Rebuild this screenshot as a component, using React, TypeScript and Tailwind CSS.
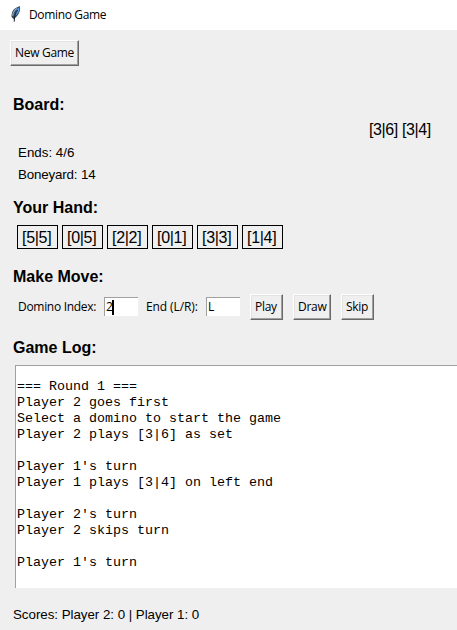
import type { ReactNode } from "react";

const ui = "font-['Open_Sans','Noto_Sans',sans-serif] text-[12px]";

const hand = ["[5|5]", "[0|5]", "[2|2]", "[0|1]", "[3|3]", "[1|4]"];

const log = `
=== Round 1 ===
Player 2 goes first
Select a domino to start the game
Player 2 plays [3|6] as set

Player 1's turn
Player 1 plays [3|4] on left end

Player 2's turn
Player 2 skips turn

Player 1's turn
`;

function Feather() {
  return (
    <svg className="ml-2 h-4 w-4 shrink-0" viewBox="0 0 16 16">
      <path d="M12 .2 C8.2 .8 4.2 4 3.8 7.5 L3.4 10.5 L5.2 13 C9 11.5 13 6 12 .2Z" fill="#34495e" />
      <path d="M11.2 1 C8.8 3 7.4 6 6.6 10.6 C10 8 12 4.5 11.2 1Z" fill="#5b9fe6" />
      <path d="M8.8 2.4 C6.2 4.5 4.8 7 4.8 9.8" fill="none" stroke="#93b2d2" strokeWidth="1.2" />
      <path d="M9.6 4 C7.6 7 6.4 10 6.2 15.6" fill="none" stroke="#111820" strokeWidth="1" />
    </svg>
  );
}

function Heading({ children, className }: { children: ReactNode; className: string }) {
  return <h2 className={`pl-[13px] text-[16px] leading-5 font-bold ${className}`}>{children}</h2>;
}

function TkButton({ children, className }: { children: ReactNode; className: string }) {
  return (
    <button
      className={`flex h-[26px] shrink-0 items-center border border-t-white border-l-white border-r-[#696969] border-b-[#696969] pl-1 tracking-[-0.3px] whitespace-nowrap shadow-[inset_-1px_-1px_0_#a0a0a0,inset_1px_1px_0_#e3e3e3] ${ui} ${className}`}
    >
      {children}
    </button>
  );
}

function Entry({ value, focused }: { value: string; focused?: boolean }) {
  return (
    <div className={`mb-px flex h-[19px] w-[34px] shrink-0 items-center border-t border-l border-[#a0a0a0] bg-white pl-px ${ui}`}>
      <span>{value}</span>
      {focused && <span className="-ml-px h-[15px] w-[2px] bg-black" />}
    </div>
  );
}

export default function App() {
  return (
    <div className="flex h-[630px] w-[457px] flex-col overflow-hidden bg-[#efefef] font-['Liberation_Sans',Arial,sans-serif] text-black">
      <header className="flex h-[30px] shrink-0 items-center bg-white pb-[2px]">
        <Feather />
        <span className={`mt-px ml-[5px] tracking-[-0.35px] ${ui}`}>Domino Game</span>
      </header>

      <div className="flex pt-[10px] pl-[10px]">
        <TkButton className="w-[69px]">New Game</TkButton>
      </div>

      <Heading className="mt-[29px]">Board:</Heading>
      <div className="mt-[5px] pl-[369px] text-[16px] leading-5 tracking-[-0.4px] whitespace-nowrap">[3|6] [3|4]</div>
      <div className="mt-[2px] pl-[18px] text-[13.33px] leading-[22px] tracking-[-0.15px]">
        <p className="tracking-normal">Ends: 4/6</p>
        <p>Boneyard: 14</p>
      </div>

      <Heading className="mt-3">Your Hand:</Heading>
      <div className="mt-[7px] flex gap-1 pl-[17px]">
        {hand.map((tile) => (
          <div
            key={tile}
            className="flex h-6 w-[41px] items-center border border-black pt-px pl-1 text-[16px] leading-5 tracking-[-0.3px]"
          >
            {tile}
          </div>
        ))}
      </div>

      <Heading className="mt-[18px]">Make Move:</Heading>
      <div className="mt-[7px] flex h-[26px] items-center pl-[18px]">
        <span className={`w-[86px] shrink-0 tracking-[-0.3px] whitespace-nowrap ${ui}`}>Domino Index:</span>
        <Entry value="2" focused />
        <span className={`ml-2 w-[60px] shrink-0 tracking-[-0.1px] whitespace-nowrap ${ui}`}>End (L/R):</span>
        <Entry value="L" />
        <TkButton className="ml-[10px] w-[33px]">Play</TkButton>
        <TkButton className="ml-[10px] w-[38px]">Draw</TkButton>
        <TkButton className="ml-[10px] w-[33px]">Skip</TkButton>
      </div>

      <Heading className="mt-[18px]">Game Log:</Heading>
      <pre className="mt-[7px] ml-[15px] h-[223px] shrink-0 overflow-hidden border-t border-l border-[#a0a0a0] bg-white pt-[13px] pl-px font-['Liberation_Mono','Courier_New',monospace] text-[13.33px] leading-4">
        {log.slice(1)}
      </pre>

      <p className="mt-[17px] pl-[13px] text-[13.33px] leading-5 tracking-[-0.03px]">Scores: Player 2: 0 | Player 1: 0</p>
    </div>
  );
}
